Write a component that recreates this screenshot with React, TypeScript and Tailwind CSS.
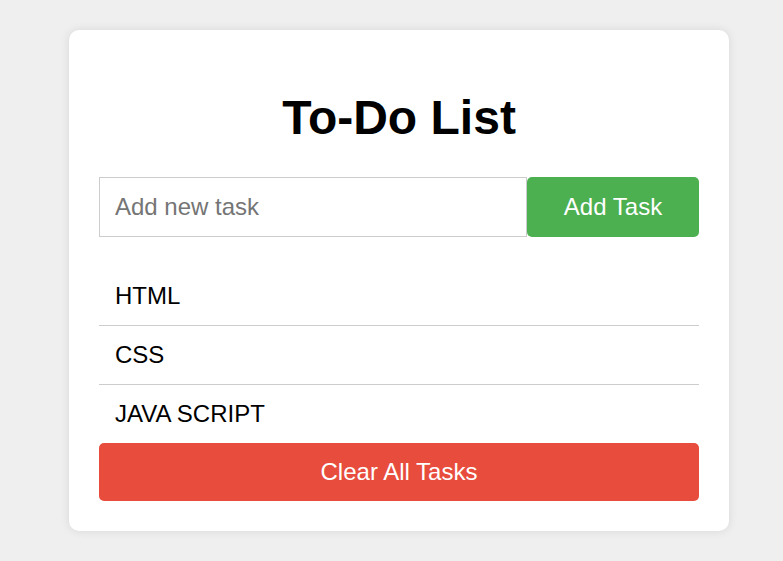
import React, { useState } from 'react';

const App: React.FC = () => {
  const [tasks, setTasks] = useState<string[]>(['HTML', 'CSS', 'JAVA SCRIPT']);
  const [text, setText] = useState('');

  const addTask = () => {
    if (!text.trim()) return;
    setTasks([...tasks, text.trim()]);
    setText('');
  };

  return (
    <div className="min-h-[561px] bg-[#efefef] pt-[30px] font-['Liberation_Sans',Arial,sans-serif]">
      <div className="ml-[69px] w-[660px] rounded-[10px] bg-white p-[30px] shadow-[0_0_10px_rgba(0,0,0,0.1)]">
        <h1 className="mt-[30px] mb-[32px] text-center text-[48px] leading-[55px] font-bold text-black">
          To-Do List
        </h1>

        {/* Input row */}
        <div className="flex">
          <input
            className="h-[60px] w-[428px] border border-[#ccc] px-[15px] text-[24px] text-black outline-none placeholder:text-[#757575]"
            placeholder="Add new task"
            value={text}
            onChange={(e) => setText(e.target.value)}
          />
          <button
            onClick={addTask}
            className="h-[60px] w-[172px] rounded-[5px] bg-[#4caf50] text-[24px] text-white"
          >
            Add Task
          </button>
        </div>

        {/* Task list */}
        <ul className="mt-[30px]">
          {tasks.map((task, i) => (
            <li
              key={i}
              className={`flex items-center px-4 text-[24px] text-black ${
                i < tasks.length - 1 ? 'h-[59px] border-b border-[#ccc]' : 'h-[58px]'
              }`}
            >
              {task}
            </li>
          ))}
        </ul>

        <button
          onClick={() => setTasks([])}
          className="h-[58px] w-full rounded-[5px] bg-[#e74c3c] text-[24px] text-white"
        >
          Clear All Tasks
        </button>
      </div>
    </div>
  );
};

export default App;
